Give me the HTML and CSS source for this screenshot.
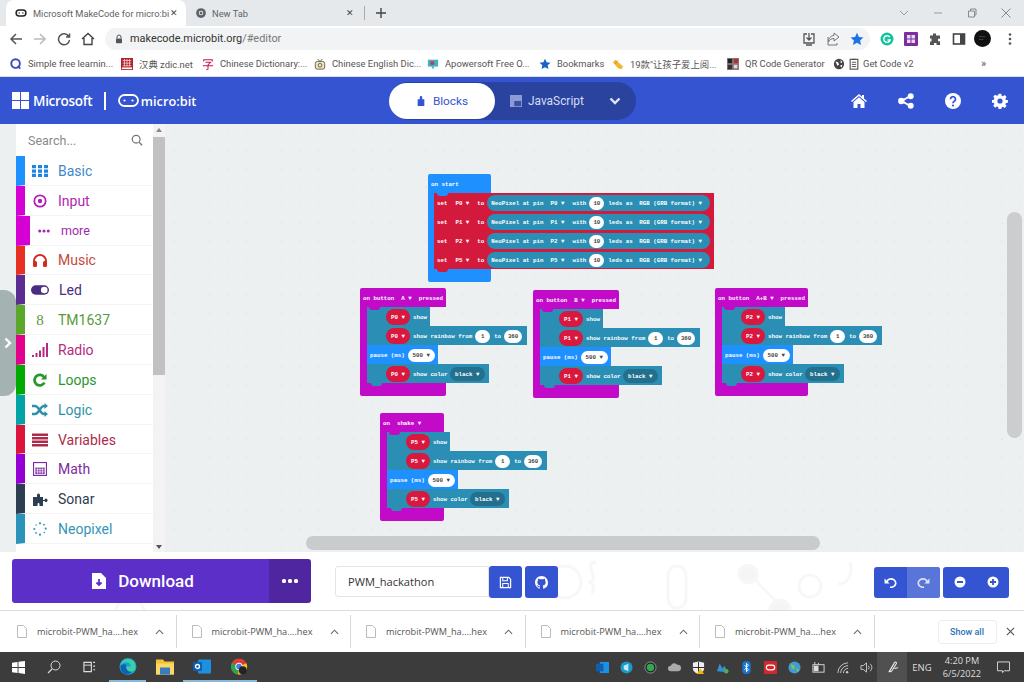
FILE: index.html
```html
<!DOCTYPE html>
<html lang="en">
<head>
<meta charset="utf-8">
<title>Microsoft MakeCode for micro:bit</title>
<link rel="stylesheet" href="styles.css">
</head>
<body>
<div class="tabstrip">
  <div class="tab active">
    <svg class="ic16" viewBox="0 0 16 16"><rect x="1.5" y="4" width="13" height="8" rx="4" fill="none" stroke="#222" stroke-width="2"/><circle cx="5.5" cy="8" r="1" fill="#222"/><circle cx="10.5" cy="8" r="1" fill="#222"/></svg>
    <span class="tabtitle">Microsoft MakeCode for micro:bi</span><span class="tabx">✕</span>
  </div>
  <div class="tab newtab">
    <svg class="ic16" viewBox="0 0 16 16"><circle cx="8" cy="8" r="6.5" fill="#5f6368"/><circle cx="8" cy="8" r="3" fill="#fff"/><circle cx="8" cy="8" r="2" fill="#5f6368"/></svg>
    <span class="tabtitle">New Tab</span><span class="tabx">✕</span>
  </div>
  <span class="tabsep"></span>
  <svg class="plus" viewBox="0 0 12 12"><path d="M6 1v10M1 6h10" stroke="#444" stroke-width="1.4"/></svg>
  <div class="winctl">
    <svg viewBox="0 0 12 12"><path d="M2 4l4 4 4-4" fill="none" stroke="#999" stroke-width="1"/></svg>
    <svg viewBox="0 0 12 12"><path d="M2 6h8" stroke="#999" stroke-width="1"/></svg>
    <svg viewBox="0 0 12 12"><path d="M2.5 4h6v6h-6zM4.5 4V2h5.500v6H8.500" fill="none" stroke="#888" stroke-width="1"/></svg>
    <svg viewBox="0 0 12 12"><path d="M1.500 1.500l9 9M10.500 1.500l-9 9" stroke="#888" stroke-width="1"/></svg>
  </div>
</div>

<div class="urlbar">
  <div class="navs">
    <svg viewBox="0 0 14 14"><path d="M13 7H2M7 2L2 7l5 5" fill="none" stroke="#555" stroke-width="1.500"/></svg>
    <svg viewBox="0 0 14 14"><path d="M1 7h11M7 2l5 5-5 5" fill="none" stroke="#bbb" stroke-width="1.500"/></svg>
    <svg viewBox="0 0 14 14"><path d="M11.800 4.500A5.500 5.500 0 1 0 12.500 8M12.500 1.500v3.500H9" fill="none" stroke="#555" stroke-width="1.500"/></svg>
    <svg viewBox="0 0 14 14"><path d="M1 7l6-5.500L13 7M3 6v6.500h8V6" fill="none" stroke="#444" stroke-width="1.400"/></svg>
  </div>
  <div class="omni">
    <svg class="lock" viewBox="0 0 10 10"><path d="M3 4.500V3a2 2 0 0 1 4 0v1.500" fill="none" stroke="#555" stroke-width="1"/><rect x="2" y="4.500" width="6" height="4.800" rx=".8" fill="#555"/></svg>
    <span class="url">makecode.microbit.org<span class="urlrest">/#editor</span></span>
    <span class="omniicons">
      <svg viewBox="0 0 14 14"><path d="M5 2H2v9h10V2H9M7 1v7M4.500 5.500L7 8l2.500-2.500M4 13h6" fill="none" stroke="#555" stroke-width="1.300"/></svg>
      <svg viewBox="0 0 14 14"><path d="M8 1l5 4-5 4V6.500C5 6.500 3.500 8 2.500 10 2.500 6 5 3.500 8 3.500zM2 5v8h9v-2" fill="none" stroke="#777" stroke-width="1"/></svg>
      <svg viewBox="0 0 14 14"><path d="M7 .8l1.900 4.100 4.500.5-3.300 3 .9 4.500L7 10.700l-4 2.200.9-4.500-3.300-3 4.500-.5z" fill="#1a73e8"/></svg>
    </span>
  </div>
  <div class="exts">
    <svg viewBox="0 0 14 14"><circle cx="7" cy="7" r="6.500" fill="#15c39a"/><path d="M9.800 5.200A3.300 3.300 0 1 0 10.200 8H7.500" fill="none" stroke="#fff" stroke-width="1.400"/></svg>
    <svg viewBox="0 0 14 14"><rect width="14" height="14" rx="1" fill="#7b2e9e"/><rect x="3" y="3" width="8" height="8" fill="#e8d8f0"/><path d="M7 3v8M3 7h8" stroke="#7b2e9e"/></svg>
    <svg viewBox="0 0 14 14"><path d="M5 1.500h3V3.500h4v3.200h-2v2.500h2V13H8.500v-2h-2.500v2H2V9.500h1.500V6.500H2V3.500h3z" fill="#555"/></svg>
    <svg viewBox="0 0 14 14"><rect x="1.500" y="2" width="11" height="10" fill="none" stroke="#444" stroke-width="1.600"/><rect x="8" y="2" width="4.500" height="10" fill="#444"/></svg>
    <svg class="avatar" viewBox="0 0 18 18"><circle cx="9" cy="9" r="9" fill="#111"/><path d="M5 7h7M5 10h5" stroke="#555" stroke-width=".7"/></svg>
    <svg viewBox="0 0 14 14"><circle cx="7" cy="2.500" r="1.300" fill="#555"/><circle cx="7" cy="7" r="1.300" fill="#555"/><circle cx="7" cy="11.500" r="1.300" fill="#555"/></svg>
  </div>
</div>

<div class="bookmarks">
  <span class="bm b1"><svg viewBox="0 0 14 14"><circle cx="6.500" cy="6.500" r="5" fill="none" stroke="#3b46c4" stroke-width="2.200"/><path d="M9 9.500l3 3" stroke="#3b46c4" stroke-width="2"/></svg>Simple free learnin...</span>
  <span class="bm b2"><svg viewBox="0 0 14 14"><rect width="14" height="14" fill="#b3202a"/><path d="M2 3h10M2 6h10M2 9h10M4 1v9M7 1v9M10 1v9" stroke="#fff" stroke-width=".7"/><rect x="1" y="11" width="12" height="2" fill="#fff"/></svg>汉典 zdic.net</span>
  <span class="bm b3"><svg viewBox="0 0 14 14"><path d="M2 4V2h10v2M4 5h6L7 8M1 9h12M7 8v5l-2 .500" fill="none" stroke="#c2185b" stroke-width="1.200"/></svg>Chinese Dictionary:...</span>
  <span class="bm b4"><svg viewBox="0 0 14 14"><rect x="1.500" y="4" width="11" height="9" rx="2.500" fill="#f3e3b8" stroke="#555"/><circle cx="7" cy="8.500" r="2.200" fill="none" stroke="#555"/><path d="M4 1l3 3 3-3" fill="none" stroke="#555"/></svg>Chinese English Dic...</span>
  <span class="bm b5"><svg viewBox="0 0 14 14"><rect x="1" y="2" width="12" height="8" fill="#39b5c4"/><circle cx="6" cy="6" r="2.500" fill="#c0405a"/><path d="M5 10l2 3 2-3" fill="#39b5c4"/></svg>Apowersoft Free O...</span>
  <span class="bm b6"><svg viewBox="0 0 14 14"><path d="M7 .8l1.900 4.100 4.500.5-3.300 3 .9 4.500L7 10.700l-4 2.200.9-4.500-3.300-3 4.500-.5z" fill="#1a62c8"/></svg>Bookmarks</span>
  <span class="bm b7"><svg viewBox="0 0 14 14"><path d="M1 5l3-3 9 8-2 3-4-1z" fill="#f2b632"/><path d="M3 7L7 3" stroke="#d08a10"/></svg>19款"让孩子爱上阅...</span>
  <span class="bm b8"><svg viewBox="0 0 14 14"><rect width="14" height="14" fill="#8a7a78"/><rect x="1" y="1" width="5" height="5" fill="#222"/><rect x="8" y="1" width="5" height="5" fill="#a33"/><rect x="1" y="8" width="5" height="5" fill="#333"/><rect x="8" y="8" width="4" height="4" fill="#ddd"/></svg>QR Code Generator</span>
  <span class="bm b9"><svg viewBox="0 0 14 14"><circle cx="7" cy="7" r="6" fill="#444"/><path d="M3 4l3 1 1 3-2 1zM9 2l2 3-2 1zM8 9l3-1-1 3z" fill="#fff"/></svg><svg viewBox="0 0 14 14"><rect x="2.500" y="1.500" width="9" height="11.500" fill="#fff" stroke="#444" stroke-width="1.200"/><path d="M4.500 5h5M4.500 7.500h5M4.500 10h5M5 1.500h4" stroke="#444"/></svg>Get Code v2</span>
  <span class="more-bm">»</span>
</div>

<header class="appbar">
  <div class="brand">
    <svg class="mslogo" viewBox="0 0 17 17"><path d="M0 0h8v8H0zM9 0h8v8H9zM0 9h8v8H0zM9 9h8v8H9z" fill="#fff"/></svg>
    <span class="mstext">Microsoft</span>
    <span class="brandsep"></span>
    <svg class="mblogo" viewBox="0 0 21 13"><rect x="1" y="1" width="19" height="11" rx="5.500" fill="none" stroke="#fff" stroke-width="1.800"/><circle cx="6.500" cy="6.500" r="1.100" fill="#fff"/><circle cx="14.500" cy="6.500" r="1.100" fill="#fff"/></svg>
    <span class="mbtext">micro:bit</span>
  </div>
  <div class="toggle">
    <div class="tog-on">
      <svg viewBox="0 0 12 14"><path d="M2 5h2.500V2.500a1.500 1.500 0 0 1 3 0V5H10v8H2z" fill="#3454d1"/></svg>Blocks
    </div>
    <div class="tog-off">
      <svg viewBox="0 0 14 14"><rect width="14" height="14" fill="#8b9bd8"/><rect x="5" y="7" width="8" height="6" fill="#3d4f9f"/></svg>JavaScript
    </div>
    <svg class="tog-chev" viewBox="0 0 12 8"><path d="M1.500 1.500L6 6l4.500-4.500" fill="none" stroke="#dfe5f7" stroke-width="2.400"/></svg>
  </div>
  <div class="appicons">
    <svg viewBox="0 0 16 14"><path d="M8 0L0 7l1 1 7-6 7 6 1-1-3-2.600V1h-2v1.700z" fill="#fff"/><path d="M2.500 8L8 3.300 13.500 8v6H9.500V10h-3v4h-4z" fill="#fff"/></svg>
    <svg viewBox="0 0 16 16"><path d="M12.500 3L3.500 8l9 5" stroke="#fff" stroke-width="2" fill="none"/><circle cx="12.700" cy="3.200" r="3" fill="#fff"/><circle cx="3.300" cy="8" r="3.200" fill="#fff"/><circle cx="12.700" cy="12.800" r="3" fill="#fff"/></svg>
    <svg viewBox="0 0 16 16"><circle cx="8" cy="8" r="8" fill="#fff"/><path d="M5.500 6.200a2.500 2.500 0 1 1 3.800 2.100c-.9.500-1.300 1-1.300 1.900" fill="none" stroke="#3454d1" stroke-width="1.800"/><circle cx="8" cy="12.500" r="1.100" fill="#3454d1"/></svg>
    <svg viewBox="0 0 16 16"><path d="M6.500 0h3l.4 2.200 1.500.6L13.300 1.500l2.100 2.100-1.300 1.900.6 1.500L16.900 7v3l-2.200.4-.6 1.500 1.300 1.900-2.100 2.100-1.900-1.300-1.500.6L9.500 17h-3l-.4-2.200-1.500-.6-1.900 1.300L.6 13.400l1.300-1.900-.6-1.500L-.9 10V7l2.200-.4.6-1.500L.6 3.200 2.700 1.100l1.900 1.300 1.500-.6z" transform="translate(.7 .7) scale(.9)" fill="#fff"/><circle cx="8" cy="8" r="2.600" fill="#3454d1"/></svg>
  </div>
</header>

<main class="workspace">
  <div class="flyout"><svg viewBox="0 0 8 12"><path d="M1.500 1.500L6 6l-4.500 4.500" fill="none" stroke="#fff" stroke-width="2.400"/></svg></div>
  <aside class="toolbox">
    <div class="search"><span>Search...</span><svg viewBox="0 0 14 14"><circle cx="6" cy="6" r="4.500" fill="none" stroke="#777" stroke-width="1.500"/><path d="M9.500 9.500L13 13" stroke="#777" stroke-width="1.600"/></svg></div>
    <div class="cat c-basic"><svg viewBox="0 0 16 12"><path d="M0 0h4v3.300H0zM6 0h4v3.300H6zM12 0h4v3.300h-4zM0 4.400h4v3.300H0zM6 4.400h4v3.300H6zM12 4.400h4v3.300h-4zM0 8.800h4V12H0zM6 8.800h4V12H6zM12 8.800h4V12h-4z" fill="currentColor"/></svg>Basic</div>
    <div class="cat c-input"><svg viewBox="0 0 16 16"><circle cx="8" cy="8" r="6.500" fill="none" stroke="currentColor" stroke-width="2"/><circle cx="8" cy="8" r="2.500" fill="currentColor"/></svg>Input</div>
    <div class="cat sub c-more"><svg viewBox="0 0 14 6"><circle cx="2" cy="3" r="1.800" fill="currentColor"/><circle cx="7" cy="3" r="1.800" fill="currentColor"/><circle cx="12" cy="3" r="1.800" fill="currentColor"/></svg>more</div>
    <div class="cat c-music"><svg viewBox="0 0 16 14"><path d="M2 11V8a6 6 0 0 1 12 0v3" fill="none" stroke="currentColor" stroke-width="2"/><rect x="1" y="8" width="4" height="6" rx="1.500" fill="currentColor"/><rect x="11" y="8" width="4" height="6" rx="1.500" fill="currentColor"/></svg>Music</div>
    <div class="cat c-led"><svg class="wide" viewBox="0 0 19 10"><rect width="19" height="10" rx="5" fill="currentColor"/><circle cx="14" cy="5" r="3.500" fill="#fff"/></svg>Led</div>
    <div class="cat c-tm"><span class="eight">8</span>TM1637</div>
    <div class="cat c-radio"><svg viewBox="0 0 16 14"><path d="M0 12h2v2H0zM3.500 10h2v4h-2zM7 7.500h2V14H7zM10.500 4h2v10h-2zM14 0h2v14h-2z" fill="currentColor"/></svg>Radio</div>
    <div class="cat c-loops"><svg viewBox="0 0 16 16"><path d="M12.800 5A6 6 0 1 0 13 11" fill="none" stroke="currentColor" stroke-width="3.200"/><path d="M15.500 1V7.500H9z" fill="currentColor"/></svg>Loops</div>
    <div class="cat c-logic"><svg viewBox="0 0 16 14"><path d="M0 3h3c4 0 5 8 9 8h1M0 11h3c4 0 5-8 9-8h1" fill="none" stroke="currentColor" stroke-width="2.400"/><path d="M12.500 0L16 3l-3.500 3zM12.500 8l3.500 3-3.500 3z" fill="currentColor"/></svg>Logic</div>
    <div class="cat c-vars"><svg viewBox="0 0 16 13"><path d="M0 0h16v2.400H0zM0 3.500h16v2.400H0zM0 7.100h16v2.400H0zM0 10.600h16V13H0z" fill="currentColor"/></svg>Variables</div>
    <div class="cat c-math"><svg viewBox="0 0 15 15"><rect x=".6" y=".6" width="13.800" height="13.800" fill="none" stroke="currentColor" stroke-width="1.200"/><path d="M2.500 6h10v7h-10z" fill="currentColor"/><path d="M2.500 8.300h10M2.500 10.600h10M5 6v7M7.500 6v7M10 6v7" stroke="#fff" stroke-width=".7"/></svg>Math</div>
    <div class="cat c-sonar"><svg viewBox="0 0 16 14"><path d="M3 5h2V3a1.500 1.500 0 0 1 3 0v2h3v3h1.500a1 1 0 0 1 3 0 1 1 0 0 1-3 1H11v5H7.500v-2a1 1 0 0 0-2 0v2H1V5z" fill="currentColor"/></svg>Sonar</div>
    <div class="cat c-neo"><svg viewBox="0 0 16 16"><g fill="currentColor"><circle cx="8" cy="1.500" r="1.300"/><circle cx="12.500" cy="3" r="1"/><circle cx="14.500" cy="7.500" r="1.300"/><circle cx="13" cy="12" r=".9"/><circle cx="8" cy="14.500" r="1.300"/><circle cx="3.500" cy="12.500" r="1"/><circle cx="1.500" cy="8" r="1.200"/><circle cx="3.500" cy="3.500" r=".9"/></g></svg>Neopixel</div>
  </aside>
  <div class="vscroll"><span class="vup"></span><span class="vthumb"></span><span class="vdown"></span></div>
  <div class="canvas">
    <!-- on start -->
    <div class="ev ev-start">
      <div class="hat hat-blue">on start</div>
      <div class="evbody spine-blue">
        <div class="rows">
          <div class="setrow"><b>set</b><i class="dd ddset">P0 ▼</i><b class="to">to</b><div class="neopill"><b>NeoPixel at pin</b><i class="dd dd1">P0 ▼</i><b class="w">with</b><i class="num n10">10</i><b class="l">leds as</b><b class="f">RGB (GRB format) ▼</b></div></div>
          <div class="setrow"><b>set</b><i class="dd ddset">P1 ▼</i><b class="to">to</b><div class="neopill"><b>NeoPixel at pin</b><i class="dd dd1">P1 ▼</i><b class="w">with</b><i class="num n10">10</i><b class="l">leds as</b><b class="f">RGB (GRB format) ▼</b></div></div>
          <div class="setrow"><b>set</b><i class="dd ddset">P2 ▼</i><b class="to">to</b><div class="neopill"><b>NeoPixel at pin</b><i class="dd dd1">P2 ▼</i><b class="w">with</b><i class="num n10">10</i><b class="l">leds as</b><b class="f">RGB (GRB format) ▼</b></div></div>
          <div class="setrow"><b>set</b><i class="dd ddset">P5 ▼</i><b class="to">to</b><div class="neopill"><b>NeoPixel at pin</b><i class="dd dd1">P5 ▼</i><b class="w">with</b><i class="num n10">10</i><b class="l">leds as</b><b class="f">RGB (GRB format) ▼</b></div></div>
        </div>
      </div>
      <div class="foot foot-blue"></div>
    </div>
    <!-- A -->
    <div class="ev ev-a">
      <div class="hat hat-mag">on button &nbsp;A ▼ &nbsp;pressed</div>
      <div class="evbody spine-mag"><div class="rows">
        <div class="row r1"><i class="pin">P0 ▼</i><b>show</b></div>
        <div class="row r2"><i class="pin">P0 ▼</i><b>show rainbow from</b><i class="num">1</i><b class="mid">to</b><i class="num n360">360</i></div>
        <div class="row pause"><b>pause (ms)</b><i class="num n500">500 ▼</i></div>
        <div class="row r4"><i class="pin">P0 ▼</i><b>show color</b><i class="color">black ▼</i></div>
      </div></div>
      <div class="foot foot-mag"></div>
    </div>
    <!-- B -->
    <div class="ev ev-b">
      <div class="hat hat-mag">on button &nbsp;B ▼ &nbsp;pressed</div>
      <div class="evbody spine-mag"><div class="rows">
        <div class="row r1"><i class="pin">P1 ▼</i><b>show</b></div>
        <div class="row r2"><i class="pin">P1 ▼</i><b>show rainbow from</b><i class="num">1</i><b class="mid">to</b><i class="num n360">360</i></div>
        <div class="row pause"><b>pause (ms)</b><i class="num n500">500 ▼</i></div>
        <div class="row r4"><i class="pin">P1 ▼</i><b>show color</b><i class="color">black ▼</i></div>
      </div></div>
      <div class="foot foot-mag"></div>
    </div>
    <!-- A+B -->
    <div class="ev ev-ab">
      <div class="hat hat-mag">on button &nbsp;A+B ▼ &nbsp;pressed</div>
      <div class="evbody spine-mag"><div class="rows">
        <div class="row r1"><i class="pin">P2 ▼</i><b>show</b></div>
        <div class="row r2"><i class="pin">P2 ▼</i><b>show rainbow from</b><i class="num">1</i><b class="mid">to</b><i class="num n360">360</i></div>
        <div class="row pause"><b>pause (ms)</b><i class="num n500">500 ▼</i></div>
        <div class="row r4"><i class="pin">P2 ▼</i><b>show color</b><i class="color">black ▼</i></div>
      </div></div>
      <div class="foot foot-mag"></div>
    </div>
    <!-- shake -->
    <div class="ev ev-shake">
      <div class="hat hat-mag">on &nbsp;shake ▼</div>
      <div class="evbody spine-mag"><div class="rows">
        <div class="row r1"><i class="pin">P5 ▼</i><b>show</b></div>
        <div class="row r2"><i class="pin">P5 ▼</i><b>show rainbow from</b><i class="num">1</i><b class="mid">to</b><i class="num n360">360</i></div>
        <div class="row pause"><b>pause (ms)</b><i class="num n500">500 ▼</i></div>
        <div class="row r4"><i class="pin">P5 ▼</i><b>show color</b><i class="color">black ▼</i></div>
      </div></div>
      <div class="foot foot-mag"></div>
    </div>
    <span class="cv-v"></span>
    <span class="cv-h"></span>
  </div>
</main>

<section class="editorbar">
  <svg class="watermark" viewBox="0 0 1024 58"><g fill="none" stroke="#f7f7f7" stroke-width="3"><circle cx="130" cy="60" r="14"/><circle cx="300" cy="24" r="10" fill="#f7f7f7"/><circle cx="565" cy="30" r="16"/><path d="M596 10q-8 0-4 10t-4 10q8 0 4 12"/><rect x="668" y="14" width="18" height="42" rx="9"/><circle cx="748" cy="22" r="9" fill="#f5f5f5"/><path d="M755 28l24 24"/><circle cx="810" cy="34" r="11"/><path d="M850 10c4 14-4 22-12 22"/><circle cx="780" cy="58" r="10" fill="#f5f5f5"/></g></svg>
  <div class="download">
    <div class="dl-main">
      <svg viewBox="0 0 14 16"><path d="M0 0h9l5 5v11H0z" fill="#fff"/><path d="M7 6v6M4.500 9.500L7 12l2.500-2.500" fill="none" stroke="#5c2fc8" stroke-width="1.800"/></svg>Download
    </div>
    <div class="dl-more"><i></i><i></i><i></i></div>
  </div>
  <div class="project">
    <div class="projname">PWM_hackathon</div>
    <div class="pbtn save"><svg viewBox="0 0 14 14"><path d="M1.500 1.500h9l2 2v9h-11z" fill="none" stroke="#fff" stroke-width="1.300"/><path d="M4 1.500v3.500h5V1.500M4 12.500V8h6v4.500" fill="none" stroke="#fff" stroke-width="1.100"/></svg></div>
    <div class="pbtn gh"><svg viewBox="0 0 16 16"><path d="M8 0C3.580 0 0 3.580 0 8c0 3.540 2.290 6.530 5.470 7.590.4.070.55-.17.55-.38 0-.19-.01-.82-.01-1.490-2.010.37-2.530-.49-2.690-.94-.09-.23-.48-.94-.82-1.130-.28-.15-.68-.52-.01-.53.63-.01 1.080.58 1.230.82.720 1.210 1.870.87 2.330.66.070-.52.28-.87.51-1.070-1.780-.2-3.640-.89-3.640-3.950 0-.87.31-1.590.82-2.150-.08-.2-.36-1.020.08-2.120 0 0 .67-.21 2.200.82.64-.18 1.320-.27 2-.27.68 0 1.360.09 2 .27 1.530-1.040 2.200-.82 2.200-.82.44 1.100.16 1.920.08 2.120.51.56.82 1.270.82 2.150 0 3.070-1.870 3.750-3.650 3.950.29.25.54.73.54 1.480 0 1.070-.01 1.930-.01 2.200 0 .21.15.46.55.38A8.013 8.013 0 0 0 16 8c0-4.420-3.580-8-8-8z" fill="#fff"/></svg></div>
  </div>
  <div class="histzoom">
    <div class="grp">
      <div class="gb undo"><svg viewBox="0 0 14 12"><path d="M3 5a5 4.500 0 1 1 3.500 6" fill="none" stroke="#fff" stroke-width="1.800"/><path d="M.5 1.500v5.500H6z" fill="#fff"/></svg></div>
      <div class="gb redo"><svg viewBox="0 0 14 12"><path d="M11 5a5 4.500 0 1 0-3.500 6" fill="none" stroke="#dfe5f7" stroke-width="1.800"/><path d="M13.500 1.500v5.500H8z" fill="#dfe5f7"/></svg></div>
    </div>
    <div class="grp">
      <div class="gb zoomb"><svg viewBox="0 0 12 12"><circle cx="6" cy="6" r="5.500" fill="#fff"/><path d="M3 6h6" stroke="#3454d1" stroke-width="1.800"/></svg></div>
      <div class="gb zoomb"><svg viewBox="0 0 12 12"><circle cx="6" cy="6" r="5.500" fill="#fff"/><path d="M3 6h6M6 3v6" stroke="#3454d1" stroke-width="1.800"/></svg></div>
    </div>
  </div>
</section>

<section class="downloads">
  <div class="dlitem"><svg viewBox="0 0 10 13"><path d="M.5.500h6l3 3v9h-9z" fill="#fff" stroke="#bbb"/></svg><span>microbit-PWM_ha....hex</span><svg class="caret" viewBox="0 0 10 6"><path d="M1 5l4-4 4 4" fill="none" stroke="#666" stroke-width="1.200"/></svg></div>
  <div class="dlitem"><svg viewBox="0 0 10 13"><path d="M.5.500h6l3 3v9h-9z" fill="#fff" stroke="#bbb"/></svg><span>microbit-PWM_ha....hex</span><svg class="caret" viewBox="0 0 10 6"><path d="M1 5l4-4 4 4" fill="none" stroke="#666" stroke-width="1.200"/></svg></div>
  <div class="dlitem"><svg viewBox="0 0 10 13"><path d="M.5.500h6l3 3v9h-9z" fill="#fff" stroke="#bbb"/></svg><span>microbit-PWM_ha....hex</span><svg class="caret" viewBox="0 0 10 6"><path d="M1 5l4-4 4 4" fill="none" stroke="#666" stroke-width="1.200"/></svg></div>
  <div class="dlitem"><svg viewBox="0 0 10 13"><path d="M.5.500h6l3 3v9h-9z" fill="#fff" stroke="#bbb"/></svg><span>microbit-PWM_ha....hex</span><svg class="caret" viewBox="0 0 10 6"><path d="M1 5l4-4 4 4" fill="none" stroke="#666" stroke-width="1.200"/></svg></div>
  <div class="dlitem"><svg viewBox="0 0 10 13"><path d="M.5.500h6l3 3v9h-9z" fill="#fff" stroke="#bbb"/></svg><span>microbit-PWM_ha....hex</span><svg class="caret" viewBox="0 0 10 6"><path d="M1 5l4-4 4 4" fill="none" stroke="#666" stroke-width="1.200"/></svg></div>
  <div class="showall">Show all</div>
  <svg class="dlclose" viewBox="0 0 10 10"><path d="M1 1l8 8M9 1L1 9" stroke="#555" stroke-width="1.300"/></svg>
</section>

<footer class="taskbar">
  <div class="task-left">
    <svg class="t-win" viewBox="0 0 14 14"><path d="M0 2l6-1v5.500H0zM7 .8L14 0v6.500H7zM0 7.500h6V13l-6-1zM7 7.500h7V14l-7-1z" fill="#fff"/></svg>
    <svg class="t-search" viewBox="0 0 14 14"><circle cx="8.500" cy="5.500" r="4.500" fill="none" stroke="#ddd"/><path d="M5 9l-4 4" stroke="#ddd" stroke-width="1.100"/></svg>
    <svg class="t-view" viewBox="0 0 14 12"><path d="M1 1h8v10H1zM11 1h2M11 5h2M11 9h2" fill="none" stroke="#ddd" stroke-width="1.200"/><path d="M1 4h8" stroke="#ddd"/></svg>
    <span class="t-app on"><svg viewBox="0 0 18 18"><circle cx="9" cy="9" r="9" fill="#1f9cd8"/><path d="M17 9c0-5-3.500-8-8-8S2 4 1 8c1.500-2.500 4-3.500 6-3.500 3.500 0 5 2.500 5 4.500H7c-.3 3 2 5.500 5 5.500 2 0 3.500-.7 4.500-2" fill="#38d1a0"/><path d="M7 9.500c0 3 2.500 5.500 6 5-2 2.500-5 3.500-8 2S1 12 1 9c1-2 3-3 6-2z" fill="#1060b0"/></svg></span>
    <span class="t-app"><svg viewBox="0 0 18 16"><path d="M0 1h7l1.500 2H18v13H0z" fill="#f4c430"/><rect y="5" width="18" height="11" fill="#fad866"/><rect x="4" y="9" width="10" height="7" fill="#3a7abf"/></svg></span>
    <span class="t-app on"><svg viewBox="0 0 18 16"><rect x="5" y="1" width="13" height="14" rx="1" fill="#1e90e0"/><rect y="3.500" width="9" height="9" rx="1" fill="#0f5fb0"/><circle cx="4.500" cy="8" r="2" fill="none" stroke="#fff" stroke-width="1.300"/></svg></span>
    <span class="t-app on"><svg viewBox="0 0 18 18"><circle cx="9" cy="9" r="8.500" fill="#e33b2e"/><path d="M9 9L1.500 5A8.500 8.500 0 0 0 8 17.500z" fill="#2fa34f"/><path d="M9 9l7.800-3.500A8.500 8.500 0 0 1 8 17.500z" fill="#f5c518"/><circle cx="9" cy="9" r="3.600" fill="#3f7fe8" stroke="#fff"/><circle cx="13" cy="13" r="4.200" fill="#222"/></svg></span>
  </div>
  <div class="tray">
    <svg viewBox="0 0 14 14"><rect x="4" y="1" width="10" height="12" fill="#1e90e0"/><rect y="3" width="8" height="8" fill="#0f5fb0"/></svg>
    <svg viewBox="0 0 14 14"><circle cx="7" cy="7" r="6.500" fill="#1e98c8"/><path d="M4 5l5-2v8l-5-2z" fill="#bfeaf5"/></svg>
    <svg viewBox="0 0 14 14"><circle cx="7" cy="7" r="6" fill="#222" stroke="#999"/><circle cx="7" cy="7" r="4" fill="#2faa4f"/></svg>
    <svg viewBox="0 0 14 14"><path d="M3 11a3 3 0 0 1 0-6 4 4 0 0 1 7-1 3.500 3.500 0 0 1 1 7z" fill="#aaa"/></svg>
    <svg viewBox="0 0 14 14"><path d="M1 2l6-1.500L13 2v6c0 3-3 5-6 6-3-1-6-3-6-6z" fill="#eee"/><path d="M7 1v12M1 7h12" stroke="#222"/><path d="M9 8l4 6H5z" fill="#f0b400"/></svg>
    <svg viewBox="0 0 14 14"><path d="M1 11l3-8 3 5 2-3 4 7z" fill="#3a8fd0"/><circle cx="11" cy="11" r="2.500" fill="#4caf50"/></svg>
    <svg viewBox="0 0 14 14"><rect x="2.500" width="9" height="14" rx="4" fill="#1776d2"/><path d="M5 4.500l4 5-2 2V2.500l2 2-4 5" fill="none" stroke="#fff"/></svg>
    <svg viewBox="0 0 14 14"><rect width="14" height="14" rx="1" fill="#d4262e"/><rect x="2.500" y="4.500" width="9" height="5" rx="2.500" fill="none" stroke="#fff" stroke-width="1.300"/></svg>
    <svg viewBox="0 0 14 14"><circle cx="7" cy="7" r="6.500" fill="#3f9bd0"/><path d="M3 3l4 2v4L4 8zM9 8l3 1-2 3z" fill="#8cc152"/></svg>
    <svg viewBox="0 0 14 14"><rect x="1" y="4" width="12" height="8" fill="none" stroke="#ddd"/><rect x="2" y="5" width="5" height="6" fill="#ddd"/><path d="M3 4V1M7 4V2" stroke="#ddd"/></svg>
    <svg viewBox="0 0 14 14"><path d="M2 13a11 11 0 0 1 11-11M5 13a8 8 0 0 1 8-8M8 13a5 5 0 0 1 5-5" fill="none" stroke="#ccc"/><circle cx="12" cy="12" r="1.300" fill="#ccc"/></svg>
    <svg viewBox="0 0 14 14"><path d="M1 5h2.500L7 2v10L3.500 9H1z" fill="none" stroke="#ccc"/><path d="M9 5a3 3 0 0 1 0 4M11 3a6 6 0 0 1 0 8" fill="none" stroke="#ccc"/></svg>
  </div>
  <div class="pen"><svg viewBox="0 0 16 16"><path d="M4 13l6-10c1-1.500 3-.5 2 1L7 12c-1 1-2 0-1.500-1l4-7M10 9c2-1 3 0 4-1" fill="none" stroke="#eee" stroke-width="1.100"/></svg></div>
  <div class="lang">ENG</div>
  <div class="clock"><span>4:20 PM</span><span>6/5/2022</span></div>
  <svg class="notif" viewBox="0 0 14 13"><path d="M.5.500h13v9.500H8l-2 2v-2H.5z" fill="none" stroke="#ddd"/></svg>
</footer>
</body>
</html>
```

FILE: styles.css
```css
* { box-sizing: border-box; }
html, body { margin: 0; padding: 0; }
body {
  width: 1024px; height: 682px; overflow: hidden;
  font-family: "Roboto", "Noto Sans CJK SC", sans-serif;
  display: flex; flex-direction: column; background: #fff;
}

/* Tab strip */
.tabstrip { height: 26px; background: #e6e9ec; display: flex; align-items: center; padding-left: 6px; flex: none; }
.tab { height: 26px; display: flex; align-items: center; font-size: 9.300px; color: #5f6368; font-family: "Roboto", sans-serif; }
.tab.active { width: 180px; background: #fff; border-radius: 8px 8px 0 0; padding: 0 8px 0 9px; }
.tab .ic16 { width: 12px; height: 12px; flex: none; }
.tab.active .ic16 { margin-right: 6px; }
.tabtitle { flex: 1; min-width: 0; white-space: nowrap; }
.tabx { font-size: 9px; color: #444; margin-left: 4px; flex: none; }
.newtab { width: 176px; padding: 0 8px 0 9px; }
.newtab .ic16 { margin-right: 5px; }
.tabsep { width: 1px; height: 14px; background: #aaa; margin-left: 2px; }
.plus { width: 12px; height: 12px; margin-left: 10px; }
.winctl { margin-left: auto; display: flex; gap: 22px; padding-right: 12px; }
.winctl svg { width: 12px; height: 12px; }

/* URL row */
.urlbar { height: 25px; display: flex; align-items: center; flex: none; background: #fff; }
.navs { display: flex; gap: 10px; padding-left: 9px; width: 105px; }
.navs svg { width: 14px; height: 14px; }
.omni { width: 765px; height: 22px; background: #f1f3f4; border-radius: 11px; display: flex; align-items: center; padding-left: 9px; }
.lock { width: 10px; height: 10px; margin-right: 6px; }
.url { font-size: 10.900px; color: #333; }
.urlrest { color: #777; }
.omniicons { margin-left: auto; display: flex; gap: 10px; padding-right: 6px; }
.omniicons svg { width: 14px; height: 14px; }
.exts { display: flex; align-items: center; gap: 10px; padding-left: 10px; }
.exts svg { width: 14px; height: 14px; }
.exts .avatar { width: 17px; height: 17px; margin: 0 -1px 0 -2px; }
.exts svg:last-child { margin-left: 3px; }

/* Bookmarks */
.bookmarks { height: 26px; display: flex; align-items: center; flex: none; background: #fff; border-bottom: 1px solid #dde; padding-left: 10px; font-family: "Roboto", "Noto Sans CJK SC", sans-serif; font-size: 9.400px; color: #555; position: relative; }
.bm { display: flex; align-items: center; gap: 6px; white-space: nowrap; }
.bm svg { width: 12px; height: 12px; flex: none; }
.b1 { width: 111px; }
.b2 { width: 81px; }
.b3 { width: 112px; }
.b4 { width: 113px; }
.b5 { width: 112px; }
.b6 { width: 73px; }
.b7 { width: 115px; }
.b8 { width: 106px; }
.b9 { gap: 3px; width: 100px; }
.more-bm { margin-left: 48px; font-size: 11px; }

/* App bar */
.appbar { height: 47px; background: #3454d1; display: flex; align-items: center; flex: none; position: relative; color: #fff; }
.brand { display: flex; align-items: center; padding-left: 12px; width: 389px; }
.mslogo { width: 17px; height: 17px; }
.mstext { font-family: "Open Sans", sans-serif; font-weight: 600; font-size: 13.500px; margin-left: 4px; letter-spacing: -.3px; }
.brandsep { width: 1.500px; height: 18px; background: #fff; margin: 0 12px; }
.mblogo { width: 21px; height: 13px; }
.mbtext { font-size: 12.800px; font-weight: 600; margin-left: 2px; font-family: "Open Sans", sans-serif; }
.toggle { width: 247px; height: 38px; background: #2a439f; border-radius: 19px; display: flex; align-items: center; }
.tog-on { width: 106px; height: 36px; background: #fff; border-radius: 18px; display: flex; align-items: center; justify-content: center; gap: 7px; color: #3454d1; font-size: 11.800px; }
.tog-on svg { width: 10px; height: 12px; }
.tog-off { display: flex; align-items: center; gap: 6px; color: #d5dcf3; font-size: 11.900px; margin-left: 15px; }
.tog-off svg { width: 12px; height: 12px; }
.tog-chev { width: 12px; height: 8px; margin-left: 25px; }
.appicons { margin-left: auto; display: flex; gap: 31px; padding-right: 16px; align-items: center; }
.appicons svg { width: 16px; height: 16px; }

/* Workspace */
.workspace { height: 428px; display: flex; flex: none; position: relative; background: #ecf0f1; }
.flyout { position: absolute; left: 0; top: 166px; width: 16px; height: 106px; background: #a5b2b2; border-radius: 0 12px 12px 0; display: flex; align-items: center; padding-left: 4px; z-index: 3; }
.flyout svg { width: 8px; height: 12px; }
.toolbox { width: 137px; margin-left: 16px; background: #fff; flex: none; height: 100%; display: flex; flex-direction: column; }
.search { height: 32px; padding: 0 10px 0 12px; display: flex; align-items: center; justify-content: space-between; color: #8a8a8a; font-size: 12.500px; flex: none; }
.search svg { width: 12px; height: 12px; }
.cat { height: 29.850px; flex: none; display: flex; align-items: center; font-size: 14px; border-left: 9px solid currentColor; border-bottom: 1px solid #f4f4f4; gap: 10px; padding-left: 7px; padding-top: 1px; }
.cat svg { width: 16px; height: 14px; flex: none; }
.cat .wide { width: 18px; margin-left: -1px; }
.eight { width: 16px; text-align: center; font-family: "Liberation Serif", serif; font-size: 15px; }
.c-basic { border-left-color: #1e90ff; color: #3f88c9; }
.c-basic svg { color: #1e84e0; }
.c-input { border-left-color: #d400d4; color: #b21fb2; }
.c-more { border-left: 14px solid #d400d4; color: #a22ab0; font-size: 12.500px; padding-left: 8px; gap: 11px; }
.c-more svg { width: 12px; height: 6px; }
.c-music { border-left-color: #e63022; color: #c5483d; }
.c-music svg { color: #d02d20; }
.c-led { border-left-color: #5c2d91; color: #4a2d80; }
.c-tm { border-left-color: #5aa82a; color: #5a9a3a; }
.c-radio { border-left-color: #e3008c; color: #b52a80; }
.c-loops { border-left-color: #00aa00; color: #2c962c; }
.c-logic { border-left-color: #00a4a6; color: #2c93a6; }
.c-vars { border-left-color: #dc143c; color: #ad2c4a; }
.c-math { border-left-color: #9400d3; color: #7a2ca0; }
.c-sonar { border-left-color: #2c3e50; color: #2c3e50; }
.c-neo { border-left-color: #2b93b9; color: #3595b5; }
.vscroll { width: 12px; background: #f3f3f3; flex: none; position: relative; }
.vthumb { position: absolute; left: 0; top: 13px; width: 12px; height: 238px; background: #c1c1c1; }
.vup { position: absolute; left: 3px; top: 4px; border: 3px solid transparent; border-top: 0; border-bottom: 4px solid #888; }
.vdown { position: absolute; left: 3px; bottom: 3px; border: 3px solid transparent; border-bottom: 0; border-top: 4px solid #555; }
.canvas {
  flex: 1; position: relative;
  background-color: #ecf0f1;
  background-image: radial-gradient(circle, #e6eaeb .8px, transparent 1px);
  background-size: 18px 18px;
}
.cv-v { position: absolute; right: 2px; top: 88px; width: 15px; height: 226px; background: #cbcdce; border-radius: 8px; }
.cv-h { position: absolute; left: 141px; top: 412px; width: 514px; height: 14px; background: #c9cbcc; border-radius: 7px; }

/* Blocks */
.ev { position: absolute; font-family: "Liberation Mono", monospace; font-size: 5.800px; color: #fff; white-space: nowrap; }
.ev b { font-weight: 700; }
.ev i { font-style: normal; font-weight: 700; }
.ev-start { left: 263px; top: 50px; }
.ev-a { left: 195px; top: 164px; }
.ev-b { left: 368px; top: 166px; }
.ev-ab { left: 550px; top: 164px; }
.ev-shake { left: 215px; top: 289px; }
.hat { height: 19px; display: flex; align-items: center; padding: 1px 0 0 3px; border-radius: 2px 2px 0 0; position: relative; white-space: pre; z-index: 2; font-weight: 700; }
.hat::after { content: ""; position: absolute; left: 9px; bottom: -3px; width: 11px; height: 3px; border-radius: 0 0 5px 5px; background: inherit; }
.hat-blue { width: 63px; background: #1e90ff; }
.hat-mag { width: 86px; background: #c20ac9; }
.ev-ab .hat-mag { width: 93px; }
.ev-shake .hat-mag { width: 64px; }
.evbody { display: flex; }
.spine-blue { padding-left: 6px; background: linear-gradient(#1e90ff, #1e90ff) left / 6px 100% no-repeat; }
.spine-mag { padding-left: 7px; background: linear-gradient(#c20ac9, #c20ac9) left / 7px 100% no-repeat; }
.foot { height: 13px; border-radius: 0 0 2px 2px; }
.foot-blue { width: 63px; background: #1e90ff; }
.foot-mag { width: 86px; background: #c20ac9; }
.ev-ab .foot-mag { width: 93px; }
.ev-shake .foot-mag { width: 64px; }
.rows { display: flex; flex-direction: column; position: relative; }
.rows::after { content: ""; position: absolute; left: 3px; bottom: -3px; width: 11px; height: 3px; border-radius: 0 0 5px 5px; background: #d41a3c; }
.evbody.spine-mag .rows::after { background: #2b8fb5; left: 4px; }

.setrow { width: 280px; height: 19px; background: #d41a3c; display: flex; align-items: center; padding: 1px 0 0 3px; }
.dd { display: inline-block; }
.ddset { margin-left: 8px; }
.to { margin-left: 8px; }
.neopill { margin-left: 3px; width: 223px; height: 16.500px; background: #2b8fb5; border-radius: 8px; display: flex; align-items: center; padding-left: 4px; flex: none; }
.dd1 { margin-left: 7px; }
.w { margin-left: 8px; }
.num { background: #fff; color: #444; height: 13px; border-radius: 7px; display: flex; align-items: center; justify-content: center; width: 15px; margin-left: 3px; flex: none; }
.n10 { margin-left: 3px; }
.l { margin-left: 4px; }
.f { margin-left: 6.600px; }

.row { height: 19px; display: flex; align-items: center; background: #2b8fb5; padding: 1px 0 0 19px; }
.row.r1 { width: 63px; }
.row.r2 { width: 160px; }
.row.r4 { width: 122px; }
.row.pause { width: 71px; padding-left: 3px; background: #1e90ff; }
.pin { width: 24px; height: 16px; border-radius: 8px; background: #d9183f; display: flex; align-items: center; justify-content: center; margin-right: 3px; flex: none; }
.mid { margin-left: 4px; }
.n360 { width: 18px; margin-left: 3px; }
.n500 { width: 27px; margin-left: 3px; }
.color { width: 35px; height: 14px; border-radius: 7px; background: #236f8e; display: flex; align-items: center; justify-content: center; margin-left: 2px; flex: none; }

/* Editor toolbar */
.editorbar { height: 58px; background: #fff; display: flex; align-items: center; flex: none; position: relative; padding-left: 12px; }
.watermark { position: absolute; left: 0; top: 0; width: 1024px; height: 58px; }
.download { width: 299px; height: 44px; display: flex; border-radius: 3px; overflow: hidden; position: relative; }
.dl-main { width: 257px; background: #5c2fc8; color: #fff; font-size: 17px; font-weight: 500; display: flex; align-items: center; justify-content: center; gap: 12px; padding-left: 5px; }
.dl-main svg { width: 14px; height: 16px; }
.dl-more { flex: 1; background: #4f269f; display: flex; align-items: center; justify-content: center; gap: 1.500px; }
.dl-more i { width: 4.500px; height: 4.500px; background: #fff; border-radius: 1.500px; }
.project { display: flex; margin-left: 24px; position: relative; margin-top: 2px; }
.projname { width: 154px; height: 31px; background: #fff; border: 1px solid #e4e4e4; border-radius: 3px 0 0 3px; font-size: 11.100px; color: #333; display: flex; align-items: center; padding-left: 12px; font-family: "Open Sans", sans-serif; }
.pbtn { width: 33px; height: 32px; background: #3454d1; border-radius: 3px; display: flex; align-items: center; justify-content: center; }
.pbtn.gh { margin-left: 3px; }
.pbtn svg { width: 13px; height: 13px; }
.histzoom { margin-left: auto; padding-right: 15px; display: flex; gap: 3px; position: relative; margin-top: 2px; }
.grp { display: flex; border-radius: 3px; overflow: hidden; background: #3454d1; height: 31px; }
.gb { width: 33px; display: flex; align-items: center; justify-content: center; }
.gb svg { width: 13px; height: 11px; }
.redo { background: #5a75d9; }
.zoomb svg { width: 12px; height: 12px; }

/* Downloads */
.downloads { height: 42px; background: #fff; border-top: 1px solid #dcdcdc; display: flex; align-items: center; flex: none; position: relative; padding-left: 2px; }
.dlitem { width: 174.500px; height: 33px; display: flex; align-items: center; border-right: 1px solid #d8d8d8; font-family: "Open Sans", sans-serif; font-size: 9.200px; color: #555; padding-left: 15px; flex: none; }
.dlitem > svg { width: 10px; height: 13px; margin-right: 10px; flex: none; }
.dlitem span { width: 118px; white-space: nowrap; }
.dlitem > svg.caret { width: 9px; height: 6px; margin: 0; }
.showall { margin-left: 63px; width: 59px; height: 24px; border: 1px solid #eee; border-radius: 3px; font-size: 9px; color: #2a72b8; display: flex; align-items: center; justify-content: center; font-family: "Roboto", sans-serif; font-weight: 500; flex: none; }
.dlclose { width: 9px; height: 9px; margin-left: 9px; }

/* Taskbar */
.taskbar { height: 30px; background: #3c3c3c; display: flex; align-items: center; flex: none; color: #ddd; }
.task-left { display: flex; align-items: center; width: 596px; height: 100%; }
.t-win { width: 13px; height: 13px; margin-left: 12px; }
.t-search { width: 14px; height: 14px; margin-left: 22px; }
.t-view { width: 13px; height: 12px; margin-left: 22px; }
.t-app { width: 37px; height: 100%; display: flex; align-items: center; justify-content: center; border-bottom: 2px solid transparent; flex: none; }
.t-app:first-of-type { margin-left: 13px; }
.t-app.on { border-bottom-color: #8ab9d8; }
.t-app svg { width: 18px; height: 17px; }
.tray { display: flex; gap: 11px; align-items: center; width: 281px; }
.tray svg { width: 13px; height: 13px; flex: none; }
.pen { width: 30px; height: 100%; background: #505050; display: flex; align-items: center; justify-content: center; }
.pen svg { width: 15px; height: 15px; }
.lang { font-size: 9.500px; width: 30px; text-align: center; font-family: "Open Sans", sans-serif; }
.clock { display: flex; flex-direction: column; align-items: center; font-size: 9.200px; line-height: 13px; font-family: "Open Sans", sans-serif; width: 50px; }
.notif { width: 13px; height: 13px; margin-left: 10px; }
```
